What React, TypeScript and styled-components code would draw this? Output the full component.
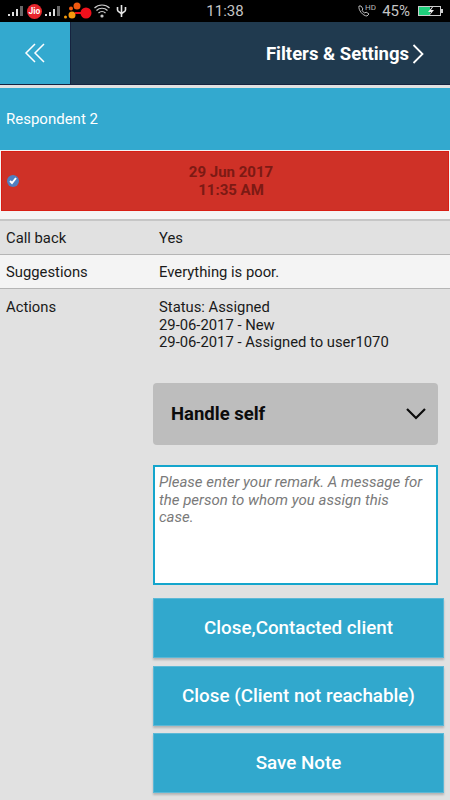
import React from 'react';
import styled, { createGlobalStyle } from 'styled-components';

const GlobalStyle = createGlobalStyle`
  html, body {
    margin: 0;
    padding: 0;
    background: #e1e1e1;
  }
  * {
    box-sizing: border-box;
  }
`;

const Page = styled.div`
  width: 450px;
  height: 800px;
  overflow: hidden;
  background: #e1e1e1;
  font-family: Roboto, "Liberation Sans", sans-serif;
  color: #1a1a1a;
`;

const StatusBar = styled.div`
  height: 22px;
  background: #000;
  display: grid;
  grid-template-columns: 1fr auto 1fr;
  align-items: center;
  color: #c4c4c4;
`;

const StatusLeft = styled.div`
  display: flex;
  align-items: center;
  gap: 2px;
  padding-left: 7px;
`;

const StatusRight = styled.div`
  display: flex;
  align-items: center;
  justify-content: flex-end;
  gap: 6px;
  font-size: 15px;
  padding-right: 7px;
`;

const Clock = styled.div`
  font-size: 15px;
`;

const JioBadge = styled.div`
  width: 15px;
  height: 15px;
  border-radius: 50%;
  background: #e8262d;
  color: #fff;
  font-size: 8.5px;
  font-weight: 700;
  display: flex;
  align-items: center;
  justify-content: center;
`;

const NavBar = styled.div`
  height: 63px;
  display: flex;
  background: #203a4f;
  border-bottom: 1px solid #16233f;
`;

const BackButton = styled.div`
  width: 71px;
  background: #33a9cf;
  border-right: 1px solid #16233f;
  display: flex;
  align-items: center;
  justify-content: center;
`;

const NavTitle = styled.div`
  flex: 1;
  display: flex;
  align-items: center;
  justify-content: flex-end;
  gap: 3px;
  padding: 1px 26px 0 0;
  color: #fff;
  font-size: 18.5px;
  font-weight: 700;
`;

const RespondentBar = styled.div`
  margin-top: 3px;
  height: 62px;
  background: #33a9cf;
  color: #fff;
  font-size: 15px;
  display: flex;
  align-items: center;
  padding-left: 6px;
`;

const DateStrip = styled.div`
  background: #f4f4f4;
  padding: 1px 1px 8px 1px;
  border-bottom: 2px solid #c6c6c6;
`;

const DateCard = styled.div`
  height: 60px;
  background: #cf3127;
  border: 1px solid #d81e14;
  display: flex;
  align-items: center;
  position: relative;
  justify-content: center;
  padding-left: 12px;
  color: #7c1a14;
  font-size: 15px;
  font-weight: 700;
  line-height: 18px;
  text-align: center;
`;

const CheckMark = styled.div`
  position: absolute;
  left: 5px;
  top: 23px;
  width: 12px;
  height: 12px;
  border-radius: 50%;
  background: #4f7fc0;
  display: flex;
  align-items: center;
  justify-content: center;
`;

const Row = styled.div<{ $light?: boolean; $height: number; $divider?: boolean }>`
  display: grid;
  grid-template-columns: 153px 1fr;
  height: ${p => p.$height}px;
  padding: ${p => (p.$divider ? 9 : 10)}px 0 0 6px;
  font-size: 14.8px;
  line-height: 17.5px;
  background: ${p => (p.$light ? '#f4f4f4' : '#e1e1e1')};
  border-bottom: ${p => (p.$divider ? '1px solid #b5b5b5' : 'none')};
`;

const Controls = styled.div`
  display: flex;
  flex-direction: column;
  margin-left: 153px;
`;

const Select = styled.div`
  width: 285px;
  height: 62px;
  background: #bdbdbd;
  border-radius: 4px;
  display: flex;
  align-items: center;
  justify-content: space-between;
  padding: 0 12px 0 18px;
  font-size: 18.5px;
  font-weight: 700;
  color: #0c0c0c;
`;

const Remark = styled.div`
  width: 285px;
  height: 120px;
  margin-top: 20px;
  background: #fff;
  border: 2px solid #14a5cc;
  padding: 7px 10px 6px 4px;
  color: #7a7a7a;
  font-size: 15px;
  font-style: italic;
  line-height: 17.5px;
`;

const ActionButton = styled.div<{ $first?: boolean }>`
  width: 291px;
  height: 60px;
  margin-top: ${p => (p.$first ? 13 : 7.5)}px;
  background: #31a8cd;
  border: 1px solid #5cb8d6;
  color: #fff;
  font-size: 18.8px;
  font-weight: 500;
  display: flex;
  align-items: center;
  justify-content: center;
  box-shadow: 0 2px 2px rgba(0, 0, 0, 0.2);
`;

const Bars: React.FC = () => (
  <svg width="18" height="14" viewBox="0 0 18 14">
    <rect x="1" y="10" width="2" height="2" fill="#ddd" />
    <rect x="5" y="8" width="2" height="4" fill="#ddd" />
    <rect x="9" y="5" width="2" height="7" fill="#ddd" />
    <rect x="13" y="2" width="3" height="10" fill="#666" />
  </svg>
);

const App: React.FC = () => (
  <Page>
    <GlobalStyle />
    <StatusBar>
      <StatusLeft>
        <Bars />
        <JioBadge>Jio</JioBadge>
        <Bars />
        <svg width="28" height="18" viewBox="0 0 28 18">
          <circle cx="8" cy="13" r="3.500" fill="#f59a0c" />
          <circle cx="13" cy="4" r="3.500" fill="#f2590f" />
          <circle cx="7" cy="6.500" r="2" fill="#f2590f" />
          <circle cx="1.500" cy="15" r="1.500" fill="#f59a0c" />
          <circle cx="22" cy="11" r="5.500" fill="#f0101c" />
          <path d="M11 11h6" stroke="#f0101c" strokeWidth="2" />
        </svg>
        <svg width="16" height="14" viewBox="0 0 16 14" fill="none" stroke="#ccc" strokeWidth="1.200">
          <path d="M0.500 4c4-4 11-4 15 0M2.500 6.500c3-3 8-3 11 0M4.500 9c2-1.800 5-1.800 7 0" />
          <circle cx="8" cy="12" r="1" fill="#ccc" />
        </svg>
        <svg width="11" height="14" viewBox="0 0 11 14" fill="none" stroke="#e6e6e6" strokeWidth="1.600" style={{ marginLeft: 4 }}>
          <path d="M5.500 1v12M1.500 3v3c0 2.500 4 2 4 4.500M9.500 3v3c0 2.500-4 2-4 4.500" />
        </svg>
      </StatusLeft>
      <Clock>11:38</Clock>
      <StatusRight>
        <svg width="19" height="16" viewBox="0 0 19 16" fill="none" stroke="#bbb" strokeWidth="1">
          <path d="M2 3c-1 4 4 10 8 10l2-2-3-2-1 1c-1 0-3-2-3-3l1-1-2-3z" />
          <text x="8" y="7" fontSize="8" fill="#bbb" stroke="none" fontFamily="Roboto">HD</text>
        </svg>
        <span>45%</span>
        <svg width="25" height="12" viewBox="0 0 25 12" style={{ marginLeft: 2 }}>
          <rect x="0.500" y="1.500" width="22" height="9" fill="none" stroke="#ccc" />
          <rect x="1" y="2" width="11" height="8" fill="#1fd07c" />
          <path d="M14 2l-4 5h3l-2 4 5-6h-3l2-3z" fill="#eee" />
          <rect x="23" y="4" width="2" height="4" fill="#ccc" />
        </svg>
      </StatusRight>
    </StatusBar>
    <NavBar>
      <BackButton>
        <svg width="22" height="20" viewBox="0 0 22 20" fill="none" stroke="#fff" strokeWidth="1.500">
          <path d="M11 1L2 10l9 9M20 1l-9 9 9 9" />
        </svg>
      </BackButton>
      <NavTitle>
        Filters &amp; Settings
        <svg width="12" height="20" viewBox="0 0 12 20" fill="none" stroke="#fff" strokeWidth="1.800">
          <path d="M1.500 1l9 9-9 9" />
        </svg>
      </NavTitle>
    </NavBar>
    <RespondentBar>Respondent 2</RespondentBar>
    <DateStrip>
      <DateCard>
        <CheckMark>
          <svg width="8" height="8" viewBox="0 0 8 8" fill="none" stroke="#fff" strokeWidth="2">
            <path d="M1 4l2 2 4-5" />
          </svg>
        </CheckMark>
        <div>
          29 Jun 2017
          <br />
          11:35 AM
        </div>
      </DateCard>
    </DateStrip>
    <Row $height={34} $divider>
      <span>Call back</span>
      <span>Yes</span>
    </Row>
    <Row $light $height={34} $divider>
      <span>Suggestions</span>
      <span>Everything is poor.</span>
    </Row>
    <Row $height={94}>
      <span>Actions</span>
      <span>
        Status: Assigned
        <br />
        29-06-2017 - New
        <br />
        29-06-2017 - Assigned to user1070
      </span>
    </Row>
    <Controls>
      <Select>
        Handle self
        <svg width="20" height="12" viewBox="0 0 20 12" fill="none" stroke="#0c0c0c" strokeWidth="2.200">
          <path d="M1 1l9 9 9-9" />
        </svg>
      </Select>
      <Remark>Please enter your remark. A message for the person to whom you assign this case.</Remark>
      <ActionButton $first>Close,Contacted client</ActionButton>
      <ActionButton>Close (Client not reachable)</ActionButton>
      <ActionButton>Save Note</ActionButton>
    </Controls>
  </Page>
);

export default App;
